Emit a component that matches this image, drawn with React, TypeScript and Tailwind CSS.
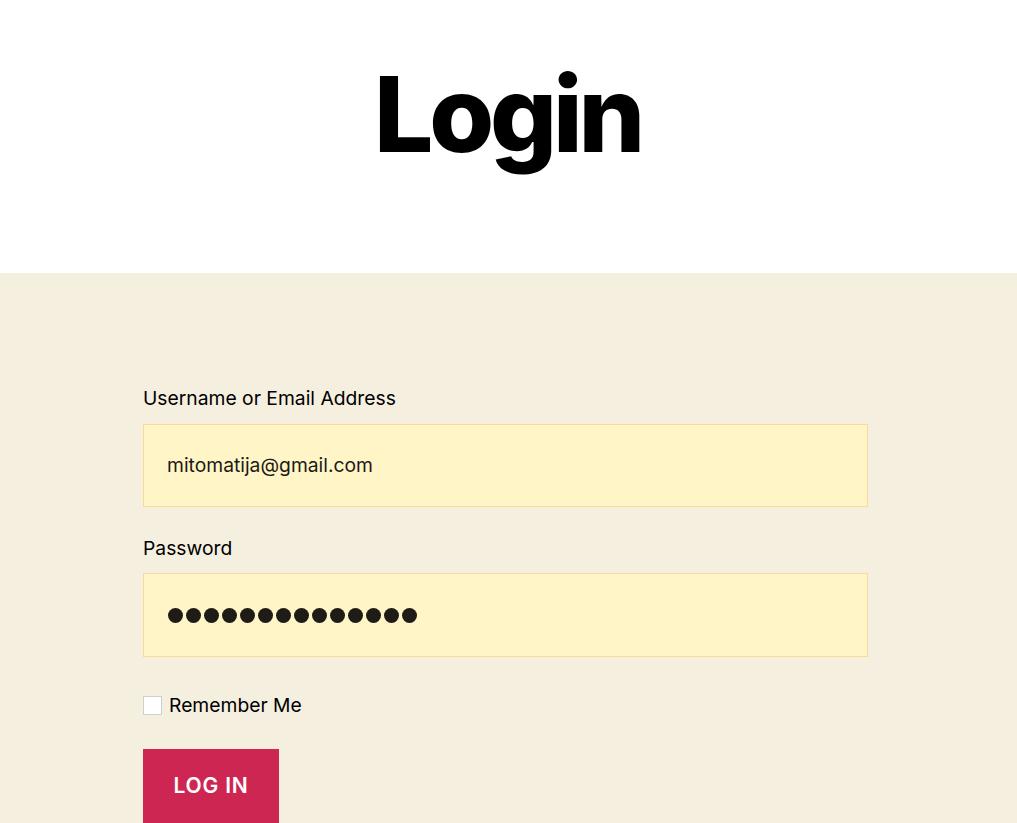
export default function App() {
  const dots = Array.from({ length: 14 });

  return (
    <div className="min-h-screen bg-[#f5efe0] font-['Inter',sans-serif] text-black">
      {/* Header */}
      <header className="flex h-[273px] items-center justify-center bg-white">
        <h1 className="pb-[46px] pr-[2px] text-[105px] font-extrabold leading-none tracking-[-0.04em] text-black">
          Login
        </h1>
      </header>

      {/* Form */}
      <section className="pt-[112px]">
        <form className="ml-[143px] w-[725px]">
          <label className="mb-[12px] block text-[19.3px] leading-[27px]">
            Username or Email Address
          </label>
          <div className="flex h-[83px] items-center border border-[#fbd996] bg-[#fff5c6] pl-[23px] text-[19.3px] text-[#1c1a16]">
            mitomatija@gmail.com
          </div>

          <label className="mt-[28px] mb-[11px] block text-[19.3px] leading-[27px]">
            Password
          </label>
          <div className="flex h-[84px] items-center gap-[3px] border border-[#fbd996] bg-[#fff5c6] pl-[24px]">
            {dots.map((_, i) => (
              <span key={i} className="h-[15px] w-[15px] rounded-full bg-[#1f1c17]" />
            ))}
          </div>

          <div className="mt-[35px] flex items-center gap-[7px]">
            <span className="h-[19px] w-[19px] border border-[#cfcfcf] bg-white" />
            <span className="text-[19.3px] leading-[27px]">Remember Me</span>
          </div>

          <button
            type="button"
            className="mt-[30px] flex h-[74px] w-[136px] items-center justify-center bg-[#cd2653] text-[21px] font-semibold tracking-[0.04em] text-white"
          >
            LOG IN
          </button>
        </form>
      </section>
    </div>
  );
}
